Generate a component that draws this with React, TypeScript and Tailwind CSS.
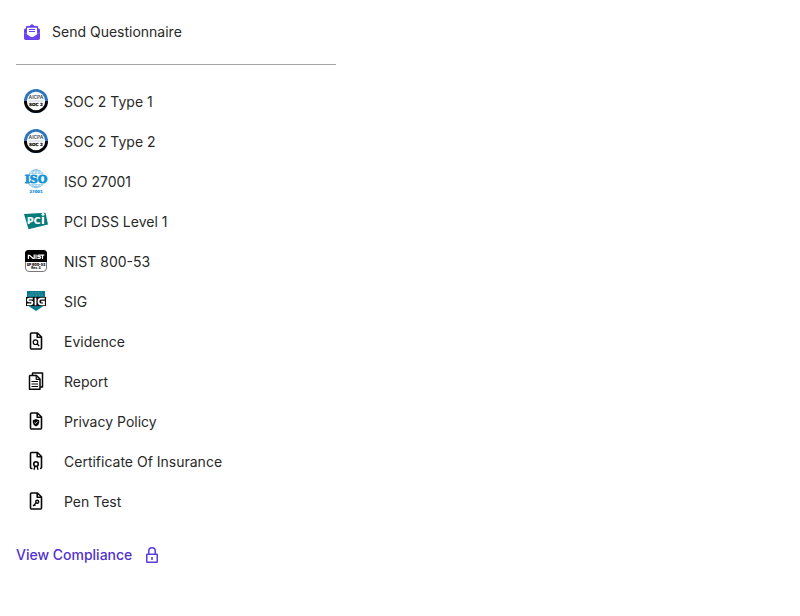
import React from "react";

const svgProps = { width: 24, height: 24, viewBox: "0 0 24 24", "aria-hidden": true, className: "block shrink-0" } as const;
const logoFont = "Inter, 'Open Sans', sans-serif";
const wideFont = "'DejaVu Sans', Inter, sans-serif";

function SocLogo() {
  return (
    <svg {...svgProps}>
      <circle cx="12" cy="12" r="12" fill="#2d76bd" />
      <path d="M0 12a12 12 0 0 0 24 0z" fill="#050505" />
      <circle cx="12" cy="12" r="9.2" fill="#fff" />
      <text x="12" y="10.4" textAnchor="middle" fontFamily={logoFont} fontSize="4.8" fontWeight="700" fill="#4c5862">AICPA</text>
      <path d="M4.500 12h15" stroke="#b9cbd8" strokeWidth="0.8" />
      <text x="12" y="17" textAnchor="middle" fontFamily={wideFont} fontSize="4.200" fontWeight="700" fill="#000" stroke="#000" strokeWidth="0.200">SOC 2</text>
    </svg>
  );
}

function IsoLogo() {
  return (
    <svg {...svgProps}>
      <g fill="none" stroke="#7fc3e8" strokeWidth="0.8">
        <path d="M4.500 5Q12-4 19.500 5M5 4.200h14M7.500 2h9M12 0v5M8 5q1-4 4-5q3 1 4 5" />
        <path d="M4.500 15Q12 22.500 19.500 15M5 15.800h14M7.500 17.600h9M12 15v4M8 15q1 3 4 4q3-1 4-4" />
      </g>
      <text x="12" y="14" textAnchor="middle" fontFamily="'DejaVu Serif', serif" fontSize="11" fontWeight="700" fill="#1793d6" stroke="#1793d6" strokeWidth="0.9">ISO</text>
      <text x="12" y="24" textAnchor="middle" fontFamily={wideFont} fontSize="3.800" fontWeight="700" fill="#1793d6" stroke="#1793d6" strokeWidth="0.200">27001</text>
    </svg>
  );
}

function PciLogo() {
  return (
    <svg {...svgProps}>
      <path d="M0 5L21.500 3.800L24 15.500L4.500 20.200z" fill="#067b7b" />
      <g fontFamily="'DejaVu Sans', sans-serif" fontSize="9" fontWeight="700" fill="#fff" stroke="#fff" strokeWidth="0.200">
        <text x="3" y="15">P</text>
        <text x="9.800" y="15">C</text>
      </g>
      <path d="M17.800 7.800h2.400V15h-2.400z" fill="#fff" />
      <circle cx="19" cy="5.300" r="1.500" fill="#fff" />
    </svg>
  );
}

function NistLogo() {
  return (
    <svg {...svgProps}>
      <rect x="1.500" y="1.500" width="21" height="21" rx="3.500" fill="#fff" stroke="#777" />
      <path d="M1 13V4.500A3.500 3.500 0 0 1 4.500 1h15A3.500 3.500 0 0 1 23 4.500V13z" fill="#000" />
      <g fill="none" stroke="#fff" strokeWidth="1.200">
        <path d="M4.400 10V6.400H5.500L9 9.300H10.200V5.500M12 5.500V10M20.300 6.100H14.800Q13.800 6.100 13.800 6.900Q13.800 7.600 14.800 7.600H15.800Q16.600 7.700 16.600 8.500Q16.600 9.300 15.500 9.300H13.300M18.500 6V10" />
      </g>
      <text x="12" y="16.700" textAnchor="middle" fontFamily={logoFont} fontSize="3.400" fontWeight="900" fill="#000">SP 800-53</text>
      <text x="12" y="20.300" textAnchor="middle" fontFamily={logoFont} fontSize="3.100" fontWeight="800" fill="#000">Rev. 4</text>
    </svg>
  );
}

function SigLogo() {
  return (
    <svg {...svgProps}>
      <path d="M3 2h18v14l-9 6L3 16z" fill="#08788d" />
      <path d="M6.500 3.800h11M4.500 6h15" stroke="#6baeba" strokeWidth="0.800" strokeDasharray="1 0.500" />
      <rect x="2" y="8" width="20" height="9" fill="#080808" />
      <g fill="none" stroke="#fff" strokeWidth="1.800">
        <path d="M8.800 9.700H5.200Q3.700 9.700 3.700 11Q3.700 12.400 5.200 12.400H7Q8.500 12.400 8.500 13.800Q8.500 15.300 7 15.300H3M11.500 8.800v7.400M20.800 9.700H17Q14.500 9.700 14.500 12.500Q14.500 15.300 17 15.300H20V12.600H17.200" />
      </g>
    </svg>
  );
}

function DocumentIcon({ children }: { children: React.ReactNode }) {
  return (
    <svg {...svgProps} fill="none" stroke="#080808" strokeWidth="1.600" strokeLinejoin="round">
      <path d="M7.500 4h6L17.500 8v11Q17.500 20 16.500 20h-9Q6.500 20 6.500 19V5Q6.500 4 7.500 4z" />
      <path d="M13.200 4v4.200h4.300" />
      {children}
    </svg>
  );
}

const EvidenceIcon = () => (
  <DocumentIcon>
    <circle cx="11.500" cy="13.200" r="2.300" strokeWidth="1.200" />
    <path d="M13 14.800l2.200 2.200" strokeWidth="1.300" />
  </DocumentIcon>
);

const ReportIcon = () => (
  <svg {...svgProps} fill="none" stroke="#080808" strokeWidth="1.500" strokeLinejoin="round">
    <path d="M8.500 6V4.500Q8.500 4 9 4h9.500V18h-2.500" />
    <path d="M6 6.500h6.500l3.500 3.500v10.200H5.500V7z" />
    <path d="M12.200 6.800v3.500H16M7.500 12.500h6.500M7.500 15h6.500M7.500 17.500h6.500" strokeWidth="1.200" />
  </svg>
);

const PrivacyIcon = () => (
  <DocumentIcon>
    <path d="M12 10l3.200 1.200v2.300q0 2.500-3.200 4q-3.200-1.500-3.200-4v-2.300z" fill="#080808" stroke="none" />
    <path d="M10.500 13.500l1.100 1.100 2-2.200" stroke="#fff" strokeWidth="0.800" />
  </DocumentIcon>
);

const CertificateIcon = () => (
  <svg {...svgProps} fill="none" stroke="#080808" strokeWidth="1.600" strokeLinejoin="round">
    <path d="M8.500 19.500h-1Q6.500 19.500 6.500 18.500V4.500Q6.500 3.500 7.500 3.500h6L17.500 7.500v11Q17.500 19.500 16 19.500" />
    <path d="M13.200 3.500v4.200h4.300" />
    <circle cx="12" cy="15" r="2.300" />
    <path d="M11 17l-1 3.700M13 17l1 3.700" strokeWidth="1.400" />
  </svg>
);

const PenTestIcon = () => (
  <DocumentIcon>
    <circle cx="13.200" cy="12.800" r="1.500" strokeWidth="1.400" />
    <path d="M12 14l-3 3M10.200 15.500l1.200 1.200" strokeWidth="1.300" />
  </DocumentIcon>
);

const documents = [
  { label: "SOC 2 Type 1", Icon: SocLogo },
  { label: "SOC 2 Type 2", Icon: SocLogo },
  { label: "ISO 27001", Icon: IsoLogo },
  { label: "PCI DSS Level 1", Icon: PciLogo },
  { label: "NIST 800-53", Icon: NistLogo },
  { label: "SIG", Icon: SigLogo },
  { label: "Evidence", Icon: EvidenceIcon },
  { label: "Report", Icon: ReportIcon },
  { label: "Privacy Policy", Icon: PrivacyIcon },
  { label: "Certificate Of Insurance", Icon: CertificateIcon },
  { label: "Pen Test", Icon: PenTestIcon },
];

export default function App() {
  return (
    <main className="bg-white p-4 font-['Inter',sans-serif] text-sm text-[#292929]">
      <div className="max-w-80">
        <button type="button" className="flex h-8 items-center gap-3 px-2">
          <svg width="16" height="16" viewBox="0 0 16 16" aria-hidden="true">
            <path d="M0 7V5.500L2 4V3Q2 2 3 2h2.500L8 0l2.500 2H13q1 0 1 1v1l2 1.500V7l-3 2.200V3.800H3v5.400z" fill="#6842ed" />
            <path d="M0 8.300l6.500 4.400q1.500.9 3 0L16 8.300v6A1.700 1.700 0 0 1 14.300 16H1.700A1.700 1.700 0 0 1 0 14.300z" fill="#6842ed" />
            <path d="M0 6l3 2.500V10L0 8.500zM16 6l-3 2.500V10l3-1.500z" fill="#6842ed" />
            <path d="M5 5h6v1H5zM5 7h6v1H5z" fill="#6842ed" />
          </svg>
          <span>Send Questionnaire</span>
        </button>
        <hr className="mt-4 border-t border-[#a3a3a3]" />
        <ul className="mt-4">
          {documents.map(({ label, Icon }) => (
            <li key={label}>
              <button type="button" className="flex h-10 w-full items-center gap-4 px-2 text-left">
                <Icon />
                <span className="pt-0.5">{label}</span>
              </button>
            </li>
          ))}
        </ul>
      </div>
      <a href="#compliance" className="mt-6 inline-flex h-5 items-center gap-3 font-medium text-[#5132cc]">
        View Compliance
        <svg width="16" height="18" viewBox="0 0 16 18" fill="none" stroke="#5b3cda" strokeWidth="1.500" aria-hidden="true">
          <rect x="2.750" y="8.250" width="10.500" height="8" rx="0.500" />
          <path d="M4.750 8V5a3.250 3.250 0 0 1 6.500 0v3M8 11v3" />
        </svg>
      </a>
    </main>
  );
}
